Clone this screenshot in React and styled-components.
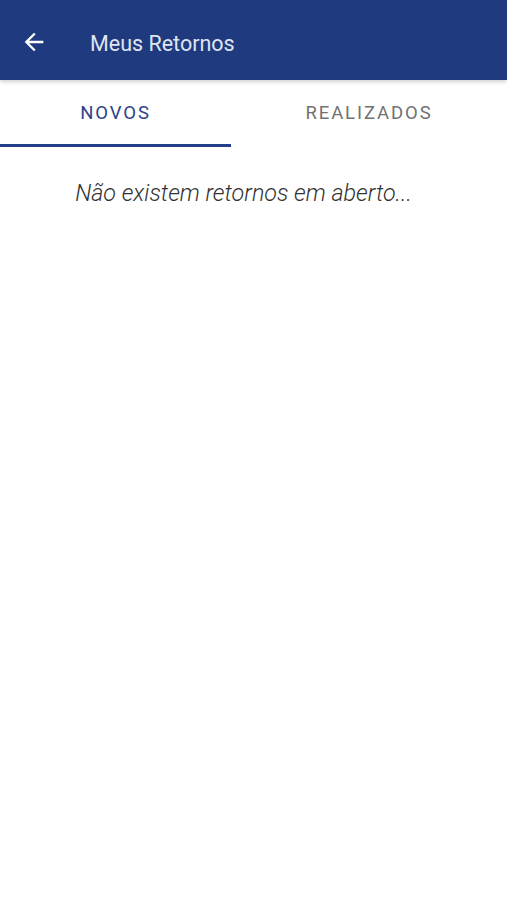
import React from "react";
import styled, { createGlobalStyle } from "styled-components";

const Global = createGlobalStyle`
  html, body { margin: 0; padding: 0; background: #fff; }
  body { font-family: Roboto, "Noto Sans", sans-serif; }
`;

const Page = styled.div`
  width: 507px;
  min-height: 900px;
  background: #fff;
  display: flex;
  flex-direction: column;
`;

const AppBar = styled.header`
  height: 80px;
  background: #1f3a7f;
  display: flex;
  align-items: center;
  padding-left: 18px;
  box-sizing: border-box;
  box-shadow: 0 2px 4px rgba(0,0,0,0.18);
  position: relative;
  z-index: 1;
`;

const BackButton = styled.button`
  width: 32px;
  height: 32px;
  padding: 0;
  border: none;
  background: transparent;
  display: flex;
  align-items: center;
  justify-content: center;
  margin-top: 3px;
`;

const Title = styled.h1`
  margin: 6px 0 0 40px;
  font-family: Roboto, sans-serif;
  font-weight: 400;
  font-size: 21.5px;
  color: #dfe5f1;
`;

const Tabs = styled.nav`
  display: flex;
  height: 67px;
`;

const Tab = styled.div`
  width: ${p => p.$w}px;
  display: flex;
  align-items: center;
  justify-content: center;
  box-sizing: border-box;
  border-bottom: 3px solid ${p => (p.$active ? "#233f8a" : "transparent")};
  font-family: Roboto, sans-serif;
  font-weight: 400;
  font-size: 18.5px;
  letter-spacing: 1.9px;
  color: ${p => (p.$active ? "#2a4388" : "#727272")};
  padding-top: 1px;
`;

const Empty = styled.p`
  margin: 32px 0 0 0;
  text-align: center;
  font-family: Roboto, sans-serif;
  font-style: italic;
  font-weight: 300;
  font-size: 23.3px;
  color: #333;
  padding-right: 20px;
`;

export default function App() {
  return (
    <Page>
      <Global />
      <AppBar>
        <BackButton aria-label="Voltar">
          <svg width="28" height="28" viewBox="0 0 24 24">
            <path d="M20 11H7.83l5.59-5.59L12 4l-8 8 8 8 1.41-1.41L7.83 13H20v-2z" fill="#fff" />
          </svg>
        </BackButton>
        <Title>Meus Retornos</Title>
      </AppBar>
      <Tabs>
        <Tab $w={231} $active>NOVOS</Tab>
        <Tab $w={276}>REALIZADOS</Tab>
      </Tabs>
      <Empty>Não existem retornos em aberto...</Empty>
    </Page>
  );
}
